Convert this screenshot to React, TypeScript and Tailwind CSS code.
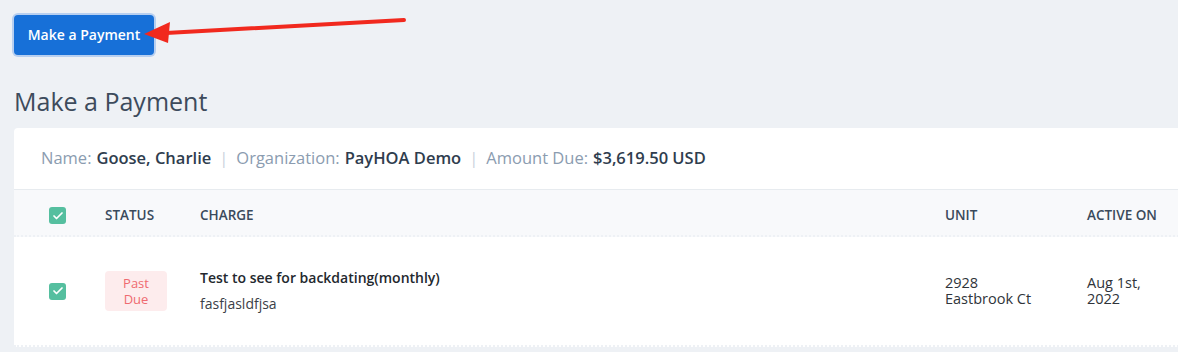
import { Check } from 'lucide-react'

const font = { fontFamily: '"Open Sans", Lato, sans-serif' }

function Tick() {
  return (
    <span className="flex h-[17px] w-[17px] items-center justify-center rounded-[3px] bg-[#55bf9f]">
      <Check size={12} strokeWidth={3.5} className="text-white" />
    </span>
  )
}

function Arrow() {
  return (
    <svg
      className="pointer-events-none absolute left-0 top-0"
      width="420"
      height="60"
      viewBox="0 0 420 60"
    >
      <line x1="404" y1="20" x2="166" y2="33" stroke="#f1291e" strokeWidth="4" strokeLinecap="round" />
      <polygon points="144,34 170,22 168,43" fill="#f1291e" />
    </svg>
  )
}

export default function App() {
  return (
    <div className="relative min-h-[352px] overflow-hidden bg-[#eef1f5] pl-[14px] pt-[15px]" style={font}>
      <Arrow />
      <button className="flex h-[40px] w-[140px] items-center justify-center rounded-[4px] bg-[#1770d8] pb-[2px] text-[14px] font-semibold text-white ring-2 ring-[#b7cff0]">
        Make a Payment
      </button>

      <h1 className="mt-[31px] text-[25px] leading-[30px] text-[#3d4b5c]">Make a Payment</h1>

      <div className="mt-[12px] mr-[-20px] rounded-tl-[4px] bg-white">
        <div className="flex h-[62px] items-center border-b border-[#e7ebef] pl-[27px] text-[16.5px]">
          <span className="text-[#8b9cb0]">Name:</span>
          <span className="ml-[5px] font-semibold text-[#2f3d4e]">Goose, Charlie</span>
          <span className="mx-[8px] text-[#c9d2dc]">|</span>
          <span className="text-[#8b9cb0]">Organization:</span>
          <span className="ml-[5px] font-semibold text-[#2f3d4e]">PayHOA Demo</span>
          <span className="mx-[8px] text-[#c9d2dc]">|</span>
          <span className="text-[#8b9cb0]">Amount Due:</span>
          <span className="ml-[5px] font-semibold text-[#2f3d4e]">$3,619.50 USD</span>
        </div>

        <div className="grid h-[47px] grid-cols-[56px_95px_745px_142px_1fr] items-center border-b-2 border-dotted border-[#eef1f5] bg-[#f8f9fb] pl-[35px] pt-[6px] text-[13.5px] font-semibold uppercase text-[#3a4a5c]">
          <Tick />
          <span>Status</span>
          <span>Charge</span>
          <span>Unit</span>
          <span>Active On</span>
        </div>

        <div className="grid h-[110px] grid-cols-[56px_95px_745px_142px_1fr] items-center border-b-2 border-dotted border-[#eef1f5] pl-[35px] text-[14px]">
          <Tick />
          <span className="flex h-[40px] w-[62px] flex-col items-center justify-center rounded-[4px] bg-[#fdeced] text-[13px] leading-[16px] text-[#ef6a70]">
            <span>Past</span>
            <span>Due</span>
          </span>
          <div className="flex flex-col">
            <span className="font-semibold leading-[20px] text-[#23282e]">Test to see for backdating(monthly)</span>
            <span className="mt-[6px] leading-[20px] text-[#3b4047]">fasfjasldfjsa</span>
          </div>
          <span className="text-[14.5px] leading-[16px] text-[#2f343a]">
            2928
            <br />
            Eastbrook Ct
          </span>
          <span className="text-[14.5px] leading-[16px] text-[#2f343a]">
            Aug 1st,
            <br />
            2022
          </span>
        </div>
      </div>
    </div>
  )
}
